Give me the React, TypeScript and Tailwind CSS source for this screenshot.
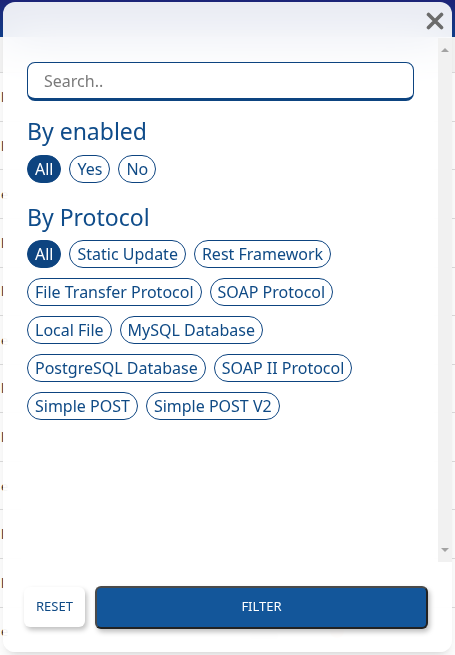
import React from 'react';

const enabledOptions = ['All', 'Yes', 'No'];
const protocols = [
  'All',
  'Static Update',
  'Rest Framework',
  'File Transfer Protocol',
  'SOAP Protocol',
  'Local File',
  'MySQL Database',
  'PostgreSQL Database',
  'SOAP II Protocol',
  'Simple POST',
  'Simple POST V2',
];

const Chip = ({ label, active }: { label: string; active?: boolean }) => (
  <button
    className={
      active
        ? 'flex h-[28px] items-center rounded-full border border-[#0d4480] bg-[#0d4480] px-[7px] text-[16px] text-white'
        : 'flex h-[28px] items-center rounded-full border border-[#0d4480] bg-white/60 px-[7px] text-[16px] text-[#0f4a85]'
    }
  >
    {label}
  </button>
);

// faded page that sits behind the modal
const BackgroundPage = () => {
  const rows = Array.from({ length: 12 });
  return (
    <div className="flex h-full w-full flex-col bg-white">
      <div className="h-[37px] bg-gradient-to-b from-[#1c2377] to-[#0f3f8c]" />
      <div className="h-[36px] bg-[#f6f6f6]" />
      {rows.map((_, i) => (
        <div key={i} className="flex h-[49px] items-center border-t border-[#dddddd] text-[13px] text-[#333]">
          <div className="w-[250px] pl-[1px] leading-[14px]">{i % 3 === 2 ? 'e' : 'l'}</div>
          <div className="flex w-[80px] flex-col gap-[4px]">
            <div className="h-[6px] w-[40px] rounded bg-[#cfcfcf]" />
            <div className="h-[6px] w-[28px] rounded bg-[#d8d8d8]" />
          </div>
          <div className="h-[14px] w-[14px] rounded-full bg-[#f3a58a]" />
        </div>
      ))}
    </div>
  );
};

const App = () => {
  return (
    <div className="relative h-[655px] w-[455px] overflow-hidden font-['Noto_Sans',sans-serif]">
      <BackgroundPage />

      <div className="absolute left-[3px] top-[2px] flex h-[650px] w-[449px] flex-col overflow-hidden rounded-[12px] bg-white/90 shadow-lg backdrop-blur-xl">
        <div className="flex h-[36px] justify-end pr-[8px] pt-[10px]">
          <svg width="18" height="18" viewBox="0 0 18 18">
            <path d="M2.5 2.5 L15.5 15.5 M15.5 2.5 L2.5 15.5" stroke="#6b6b6b" strokeWidth="3.6" strokeLinecap="round" />
          </svg>
        </div>

        <div className="flex min-h-0 flex-1">
          <div className="flex-1 pl-[24px] pr-[24px] pt-[24px]">
            <div className="flex h-[39px] items-center rounded-[8px] border border-b-[3px] border-[#0d4480] bg-white px-[16px] text-[16px] text-[#7a7a7a]">
              Search..
            </div>

            <h2 className="mt-[15px] text-[23px] leading-[30px] text-[#0f4c8a]">By enabled</h2>
            <div className="mt-[9px] flex gap-[8px]">
              {enabledOptions.map((o, i) => (
                <Chip key={o} label={o} active={i === 0} />
              ))}
            </div>

            <h2 className="mt-[19px] text-[23px] leading-[30px] text-[#0f4c8a]">By Protocol</h2>
            <div className="mt-[8px] flex flex-wrap gap-x-[8px] gap-y-[10px]">
              {protocols.map((p, i) => (
                <Chip key={p} label={p} active={i === 0} />
              ))}
            </div>
          </div>

          <div className="flex w-[14px] flex-col items-center justify-between bg-[#f1f1f1] py-[10px]">
            <div className="h-0 w-0 border-x-[4px] border-b-[4px] border-x-transparent border-b-[#a3a3a3]" />
            <div className="h-0 w-0 border-x-[4px] border-t-[4px] border-x-transparent border-t-[#a3a3a3]" />
          </div>
        </div>

        <div className="flex h-[90px] items-center gap-[10px] pl-[21px] pr-[24px]">
          <button className="h-[40px] w-[61px] rounded-[6px] bg-white text-[13px] text-[#0f4a85] shadow-[2px_3px_5px_rgba(0,0,0,0.25)]">
            RESET
          </button>
          <button className="h-[43px] flex-1 rounded-[6px] border-2 border-[#4a4a4a] border-b-[#222] border-r-[#222] bg-[#13569a] text-[13px] text-white shadow-[2px_3px_5px_rgba(0,0,0,0.25)]">
            FILTER
          </button>
        </div>
      </div>
    </div>
  );
};

export default App;
